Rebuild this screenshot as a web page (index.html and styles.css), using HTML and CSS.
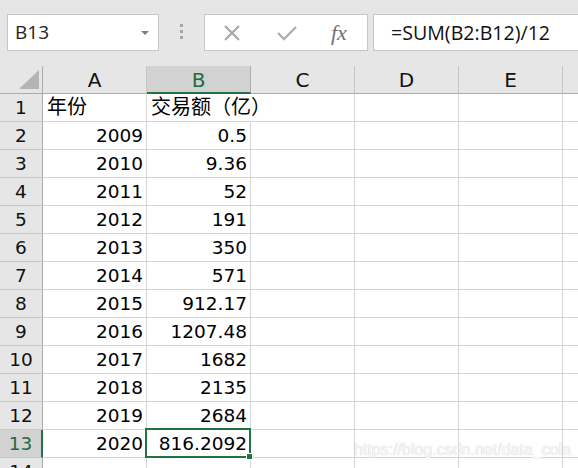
FILE: index.html
```html
<!DOCTYPE html>
<html>
<head>
<meta charset="utf-8">
<link rel="stylesheet" href="styles.css">
</head>
<body>
<div class="app">
  <div class="toolbar">
    <div class="namebox">
      <span class="name">B13</span>
      <span class="dropdown"></span>
    </div>
    <div class="grip"><i></i><i></i><i></i></div>
    <div class="buttons">
      <svg class="icon" width="18" height="16" viewBox="0 0 18 16"><path d="M2 1 L16 15 M16 1 L2 15" stroke="#a6a6a6" stroke-width="2" fill="none"/></svg>
      <svg class="icon" width="20" height="16" viewBox="0 0 20 16"><path d="M1 8 L7 14 L19 2" stroke="#b0b0b0" stroke-width="2.4" fill="none"/></svg>
      <span class="fx">fx</span>
    </div>
    <div class="formula">=SUM(B2:B12)/12</div>
  </div>

  <div class="sheet">
    <div class="corner"><span class="tri"></span></div>
    <div class="colhead">A</div>
    <div class="colhead sel">B</div>
    <div class="colhead">C</div>
    <div class="colhead">D</div>
    <div class="colhead">E</div>
    <div class="colhead last"></div>

    <div class="rowhead">1</div><div class="cell txt">年份</div><div class="cell txt over">交易额（亿）</div><div class="cell"></div><div class="cell"></div><div class="cell"></div><div class="cell last"></div>
    <div class="rowhead">2</div><div class="cell num">2009</div><div class="cell num">0.5</div><div class="cell"></div><div class="cell"></div><div class="cell"></div><div class="cell last"></div>
    <div class="rowhead">3</div><div class="cell num">2010</div><div class="cell num">9.36</div><div class="cell"></div><div class="cell"></div><div class="cell"></div><div class="cell last"></div>
    <div class="rowhead">4</div><div class="cell num">2011</div><div class="cell num">52</div><div class="cell"></div><div class="cell"></div><div class="cell"></div><div class="cell last"></div>
    <div class="rowhead">5</div><div class="cell num">2012</div><div class="cell num">191</div><div class="cell"></div><div class="cell"></div><div class="cell"></div><div class="cell last"></div>
    <div class="rowhead">6</div><div class="cell num">2013</div><div class="cell num">350</div><div class="cell"></div><div class="cell"></div><div class="cell"></div><div class="cell last"></div>
    <div class="rowhead">7</div><div class="cell num">2014</div><div class="cell num">571</div><div class="cell"></div><div class="cell"></div><div class="cell"></div><div class="cell last"></div>
    <div class="rowhead">8</div><div class="cell num">2015</div><div class="cell num">912.17</div><div class="cell"></div><div class="cell"></div><div class="cell"></div><div class="cell last"></div>
    <div class="rowhead">9</div><div class="cell num">2016</div><div class="cell num">1207.48</div><div class="cell"></div><div class="cell"></div><div class="cell"></div><div class="cell last"></div>
    <div class="rowhead">10</div><div class="cell num">2017</div><div class="cell num">1682</div><div class="cell"></div><div class="cell"></div><div class="cell"></div><div class="cell last"></div>
    <div class="rowhead">11</div><div class="cell num">2018</div><div class="cell num">2135</div><div class="cell"></div><div class="cell"></div><div class="cell"></div><div class="cell last"></div>
    <div class="rowhead">12</div><div class="cell num">2019</div><div class="cell num">2684</div><div class="cell"></div><div class="cell"></div><div class="cell"></div><div class="cell last"></div>
    <div class="rowhead sel">13</div><div class="cell num">2020</div><div class="cell num active">816.2092<span class="selbox"><span class="handle"></span></span></div><div class="cell"></div><div class="cell"></div><div class="cell"></div><div class="cell last"></div>
    <div class="rowhead">14</div><div class="cell"></div><div class="cell"></div><div class="cell"></div><div class="cell"></div><div class="cell"></div><div class="cell last"></div>
  </div>
  <div class="watermark">https://blog.csdn.net/data_cola</div>
</div>
</body>
</html>
```

FILE: styles.css
```css
html, body {
  margin: 0;
  padding: 0;
}
body {
  width: 578px;
  height: 468px;
  overflow: hidden;
  background: #ffffff;
  font-family: "Open Sans", "Noto Sans CJK SC", sans-serif;
  color: #000;
}
.app {
  position: relative;
  width: 578px;
  height: 468px;
  overflow: hidden;
}
.toolbar {
  height: 66px;
  background: #e6e6e6;
  display: flex;
  align-items: flex-start;
  padding: 14px 0 0 7px;
  box-sizing: border-box;
}
.namebox {
  width: 152px;
  height: 37px;
  box-sizing: border-box;
  background: #fff;
  border: 1px solid #c6c6c6;
  display: flex;
  align-items: center;
  padding: 0 0 0 7px;
  position: relative;
}
.name {
  font-size: 19px;
  color: #222;
  line-height: 35px;
}
.dropdown {
  position: absolute;
  left: 133px;
  top: 16px;
  width: 0;
  height: 0;
  border-left: 4px solid transparent;
  border-right: 4px solid transparent;
  border-top: 4px solid #7f7f7f;
}
.grip {
  width: 45px;
  display: flex;
  flex-direction: column;
  align-items: center;
  gap: 3px;
  padding-top: 10px;
}
.grip i {
  display: block;
  width: 3px;
  height: 3px;
  background: #a6a6a6;
}
.buttons {
  width: 164px;
  height: 37px;
  box-sizing: border-box;
  background: #fff;
  border: 1px solid #c6c6c6;
  display: flex;
  align-items: center;
  padding-left: 18px;
}
.buttons .icon {
  display: block;
  margin-right: 36px;
}
.buttons .icon + .icon {
  margin-right: 34px;
}
.fx {
  font-family: "Liberation Serif", serif;
  font-style: italic;
  font-size: 22px;
  color: #707070;
  line-height: 35px;
}
.formula {
  flex: 1;
  height: 37px;
  box-sizing: border-box;
  margin-left: 5px;
  margin-right: -4px;
  background: #fff;
  border: 1px solid #c6c6c6;
  padding-left: 17px;
  font-size: 19.6px;
  line-height: 35px;
  color: #111;
  white-space: nowrap;
}
.sheet {
  display: grid;
  grid-template-columns: 43px repeat(5, 104px) 1fr;
  grid-auto-rows: 28px;
  background: #fff;
  font-family: "DejaVu Sans", "Noto Sans CJK SC", sans-serif;
}
.sheet > div {
  box-sizing: border-box;
  font-size: 18.5px;
  line-height: 27px;
  white-space: nowrap;
}
.corner {
  background: #e6e6e6;
  border-right: 1px solid #ababab;
  border-bottom: 1px solid #ababab;
  position: relative;
}
.tri {
  position: absolute;
  right: 3px;
  bottom: 4px;
  width: 0;
  height: 0;
  border-left: 20px solid transparent;
  border-bottom: 19px solid #b4b4b4;
}
.colhead {
  background: #e6e6e6;
  border-right: 1px solid #c6c6c6;
  border-bottom: 1px solid #ababab;
  text-align: center;
  color: #111;
  padding-top: 1px;
}
.sheet > .colhead {
  font-size: 20px;
}
.colhead.last {
  border-right: none;
}
.colhead.sel {
  background: #d2d2d2;
  color: #1e6b40;
  border-bottom: 2px solid #217346;
  border-right-color: #ababab;
}
.rowhead {
  background: #e6e6e6;
  border-right: 1px solid #ababab;
  border-bottom: 1px solid #c6c6c6;
  text-align: center;
  color: #111;
}
.rowhead.sel {
  background: #d2d2d2;
  color: #1e6b40;
  border-right: 2px solid #217346;
}
.cell {
  border-right: 1px solid #d4d4d4;
  border-bottom: 1px solid #d4d4d4;
  position: relative;
}
.cell.last {
  border-right: none;
}
.cell.num {
  text-align: right;
  padding-right: 3px;
}
.sheet > .cell.txt {
  padding-left: 4px;
  font-size: 20px;
}
.cell.over {
  overflow: visible;
  z-index: 1;
  border-right-color: transparent;
}
.selbox {
  position: absolute;
  left: -2px;
  top: -2px;
  right: -1px;
  bottom: -1px;
  border: 2px solid #217346;
  z-index: 2;
}
.handle {
  position: absolute;
  right: -4px;
  bottom: -4px;
  width: 5px;
  height: 5px;
  background: #217346;
  border: 1px solid #fff;
}
.watermark {
  position: absolute;
  left: 354px;
  top: 440px;
  font-family: "Liberation Sans", sans-serif;
  font-size: 16px;
  line-height: 20px;
  color: #f8f8f8;
  text-shadow: 0 0 1px #bdbdbd;
  z-index: 3;
  white-space: nowrap;
}
```
